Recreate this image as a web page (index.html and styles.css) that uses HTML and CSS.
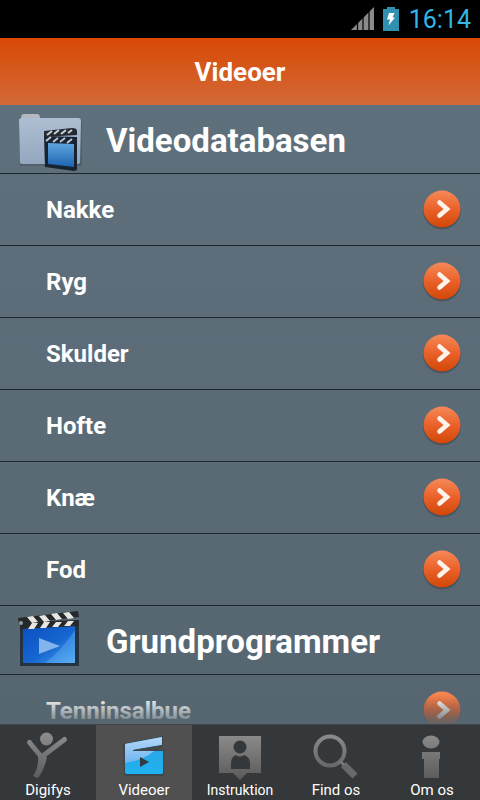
FILE: index.html
```html
<!DOCTYPE html>
<html lang="da">
<head>
<meta charset="utf-8">
<meta name="viewport" content="width=device-width, initial-scale=1">
<title>Videoer</title>
<link rel="stylesheet" href="styles.css">
</head>
<body>
<svg class="defs" aria-hidden="true">
  <defs>
    <linearGradient id="orange" x1="0" y1="0" x2="0" y2="1"><stop offset="0" stop-color="#f68a58"/><stop offset=".5" stop-color="#e9622a"/><stop offset="1" stop-color="#d34606"/></linearGradient>
    <linearGradient id="grey" gradientUnits="userSpaceOnUse" x1="0" y1="0" x2="0" y2="48"><stop offset="0" stop-color="#8e8e8e"/><stop offset="1" stop-color="#5a5a5a"/></linearGradient>
    <linearGradient id="folder" x1="0" y1="0" x2="0" y2="1"><stop offset="0" stop-color="#aebfd3"/><stop offset="1" stop-color="#93a7bf"/></linearGradient>
    <linearGradient id="screen" x1="0" y1="0" x2="0" y2="1"><stop offset="0" stop-color="#5fa6e0"/><stop offset="1" stop-color="#1c64ae"/></linearGradient>
    <linearGradient id="board" x1="0" y1="0" x2="1" y2="1"><stop offset="0" stop-color="#0b50c0"/><stop offset=".55" stop-color="#1666d0"/><stop offset="1" stop-color="#4ba5f0"/></linearGradient>
    <linearGradient id="clap" x1="0" y1="0" x2="0" y2="1"><stop offset="0" stop-color="#b4d8fa"/><stop offset="1" stop-color="#6fb4ee"/></linearGradient>
    <linearGradient id="cyan" x1="0" y1="0" x2="0" y2="1"><stop offset="0" stop-color="#2f9fe0"/><stop offset="1" stop-color="#1fb2f0"/></linearGradient>
    <symbol id="chevron" viewBox="0 0 40 42">
      <circle cx="20" cy="21.500" r="19" fill="#3d4348" opacity=".55"/>
      <circle cx="20" cy="20" r="18.500" fill="url(#orange)"/>
      <path d="M17.500 13.500l7.500 6.500-7.500 6.500" fill="none" stroke="#fff3ec" stroke-width="4.600" stroke-linecap="round"/>
    </symbol>
  </defs>
</svg>

<div class="status">
  <svg width="24" height="24" viewBox="0 0 24 24" aria-hidden="true"><path d="M0 23L23 0V23Z" fill="#8a8a8a"/><path d="M6.500 0V24M12 0V24M18 0V24" stroke="#000" stroke-width="1.200"/></svg>
  <svg width="16" height="24" viewBox="0 0 16 24" aria-hidden="true"><path d="M0 2H4V0H12V2H16V24H0Z" fill="#318fb0"/><path d="M6 6H11.500L9.500 10.500H12L5.500 18.500L7 12.500H4Z" fill="#fff"/></svg>
  <time>16:14</time>
</div>

<header class="title"><h1>Videoer</h1></header>

<main class="list">
  <section>
    <h2 class="group">
      <svg class="group-icon" viewBox="0 0 70 64" aria-hidden="true">
        <path d="M4 12Q5 7 9 7H21Q24 7 24 10H62Q67 10 67 14V58H5Z" fill="#414c56" opacity=".4"/>
        <path d="M6 10Q6 6 9 6H22Q25 6 25 10V15H6Z" fill="#b4b9c1"/>
        <path d="M4 12Q4 10 7 10H63Q66 10 66 13L65 54Q65 56 62 56H8Q5 56 5 54Z" fill="url(#folder)"/>
        <path d="M29 28L62 29V62L59 63 30 59Z" fill="#172330"/>
        <path d="M29 23L57 20Q62 20 62 23V27L29 29Z" fill="#252b31"/>
        <path d="M32 27l5-4M39 26l5-4M46 26l5-4M53 25l4-3" stroke="#c4d0dc" stroke-width="2"/>
        <path d="M31 33l5-4M38 34l5-4M45 34l5-4M52 35l5-4" stroke="#bac8d5" stroke-width="2"/>
        <path d="M33 35L59 36V59L33 56Z" fill="url(#screen)"/>
      </svg>
      Videodatabasen
    </h2>
    <ul>
      <li><a href="#nakke">Nakke<svg class="go" aria-hidden="true"><use href="#chevron"/></svg></a></li>
      <li><a href="#ryg">Ryg<svg class="go" aria-hidden="true"><use href="#chevron"/></svg></a></li>
      <li><a href="#skulder">Skulder<svg class="go" aria-hidden="true"><use href="#chevron"/></svg></a></li>
      <li><a href="#hofte">Hofte<svg class="go" aria-hidden="true"><use href="#chevron"/></svg></a></li>
      <li><a href="#knae">Knæ<svg class="go" aria-hidden="true"><use href="#chevron"/></svg></a></li>
      <li><a href="#fod">Fod<svg class="go" aria-hidden="true"><use href="#chevron"/></svg></a></li>
    </ul>
  </section>
  <section>
    <h2 class="group">
      <svg class="group-icon" viewBox="0 0 70 64" aria-hidden="true">
        <path d="M5 15H64V57H5Z" fill="#253241"/>
        <path d="M8 17H60V54H8Z" fill="url(#board)"/>
        <path d="M60 21V54H30Q46 42 60 21Z" fill="#7cc6ff" opacity=".3"/>
        <path d="M24 29L45 37 24 45Z" fill="#83b5ec"/>
        <path d="M3 9L63 2 64 8 4 15Z" fill="#25292b"/>
        <path d="M4 13L64 11V17L6 20Z" fill="#25292b"/>
        <path d="M12 8l6-1 5 6-6 1ZM24 7l6-1 5 6-6 1ZM36 5l6-1 5 6-6 1ZM48 4l6-1 5 6-6 1ZM17 14h6l-4 6h-6ZM29 13h6l-4 6h-6ZM41 13h6l-4 5h-6ZM53 12h6l-4 5h-6Z" fill="#e8e6e1"/>
        <circle cx="6" cy="14" r="2" fill="#969a9d"/>
      </svg>
      Grundprogrammer
    </h2>
    <ul>
      <li><a href="#tenninsalbue">Tenninsalbue<svg class="go" aria-hidden="true"><use href="#chevron"/></svg></a></li>
    </ul>
  </section>
</main>

<nav class="tabs">
  <a href="#digifys">
    <svg viewBox="0 0 48 48" aria-hidden="true"><circle cx="22.500" cy="7" r="6.500" fill="url(#grey)"/><path d="M5.500 10.500L17.500 25 40.500 7.500" fill="none" stroke="url(#grey)" stroke-width="5" stroke-linecap="round" stroke-linejoin="round"/><path d="M14 23L23 25Q21 36 15 45Q13 47 9 44Q15 36 14 23Z" fill="url(#grey)"/></svg>
    Digifys
  </a>
  <a href="#videoer" class="active" aria-current="page">
    <svg viewBox="0 0 48 48" aria-hidden="true"><path d="M3 12L43 4V14L30 18H44V43Q44 44 42 44H6Q4 44 4 42Z" fill="#273945" opacity=".45"/><path d="M5 12L42 5V13L15 17.500V19H43V41Q43 42 41 42H7Q5 42 5 40Z" fill="url(#cyan)"/><path d="M5 12L42 5V13L15 17.500V19H34Q24 28 5 31Z" fill="url(#clap)"/><path d="M13 18L42 13V16L34 19H13Z" fill="#3f484f"/><path d="M20 25L29 30 20 35Z" fill="#303b42"/></svg>
    Videoer
  </a>
  <a href="#instruktion" class="long">
    <svg viewBox="0 0 48 48" aria-hidden="true"><path d="M3 4H45V41H31L24 48 17 41H3Z" fill="url(#grey)"/><circle cx="24" cy="15" r="6.500" fill="#35383a"/><path d="M15 37V31Q15 25 20 23Q24 26 28 23Q34 25 34 31V37Z" fill="#35383a"/></svg>
    Instruktion
  </a>
  <a href="#find">
    <svg viewBox="0 0 48 48" aria-hidden="true"><circle cx="18" cy="19" r="14.500" fill="none" stroke="url(#grey)" stroke-width="4"/><path d="M31.500 32.500L43 44" stroke="#696969" stroke-width="7"/><path d="M28 29L32 33" stroke="#777" stroke-width="3"/></svg>
    Find os
  </a>
  <a href="#om">
    <svg viewBox="0 0 48 48" aria-hidden="true"><ellipse cx="23" cy="10" rx="8.500" ry="6.500" fill="url(#grey)"/><path d="M14 20H32V27H31V46H16V27H14Z" fill="url(#grey)"/></svg>
    Om os
  </a>
</nav>
</body>
</html>
```
FILE: styles.css
```css
* {
  box-sizing: border-box;
}

body {
  margin: 0;
  height: 100vh;
  display: flex;
  flex-direction: column;
  overflow: hidden;
  background: #000;
  color: #fff;
  font-family: Roboto, "Liberation Sans", sans-serif;
}

a {
  color: inherit;
  text-decoration: none;
}

.defs {
  position: absolute;
  width: 0;
  height: 0;
}

.status {
  flex: none;
  height: 38px;
  display: flex;
  align-items: center;
  justify-content: flex-end;
  gap: 8px;
  padding-right: 9px;
  color: #33b5e5;
  font-size: 25px;
}

.status time {
  padding-left: 2px;
}

.title {
  flex: none;
  height: 67px;
  display: flex;
  align-items: center;
  justify-content: center;
  background: linear-gradient(#d84804, #d26a38);
}

.title h1 {
  margin: 0;
  font-size: 26px;
  font-weight: 700;
}

.list {
  position: relative;
  flex: 1;
  min-height: 0;
  overflow: hidden;
  background: linear-gradient(#5f707d, #566670);
}

.list::after {
  content: "";
  position: absolute;
  inset: auto 0 0;
  height: 28px;
  background: linear-gradient(rgba(86, 102, 112, 0), rgba(86, 102, 112, .9));
}

.list ul {
  margin: 0;
  padding: 0;
  list-style: none;
}

.group {
  margin: 0;
  height: 69px;
  display: flex;
  align-items: center;
  gap: 21px;
  padding: 2px 15px 0;
  border-bottom: 1px solid #1d272f;
  font-size: 33px;
  font-weight: 700;
}

.group-icon {
  width: 70px;
  height: 64px;
}

.list li a {
  height: 72px;
  display: flex;
  align-items: center;
  justify-content: space-between;
  padding: 1px 18px 0 46px;
  border-bottom: 1px solid #1d272f;
  font-size: 24px;
  font-weight: 700;
}

.go {
  width: 40px;
  height: 42px;
}

.tabs {
  flex: none;
  height: 76px;
  display: grid;
  grid-template-columns: repeat(5, 1fr);
  background: #35383a;
  border-top: 1px solid #414548;
  font-size: 15px;
}

.tabs a {
  display: flex;
  flex-direction: column;
  align-items: center;
  padding-top: 7px;
  line-height: 20px;
}

.tabs svg {
  width: 48px;
  height: 48px;
}

.tabs .active {
  background: #505050;
}

.tabs .long {
  font-size: 14px;
}
```
